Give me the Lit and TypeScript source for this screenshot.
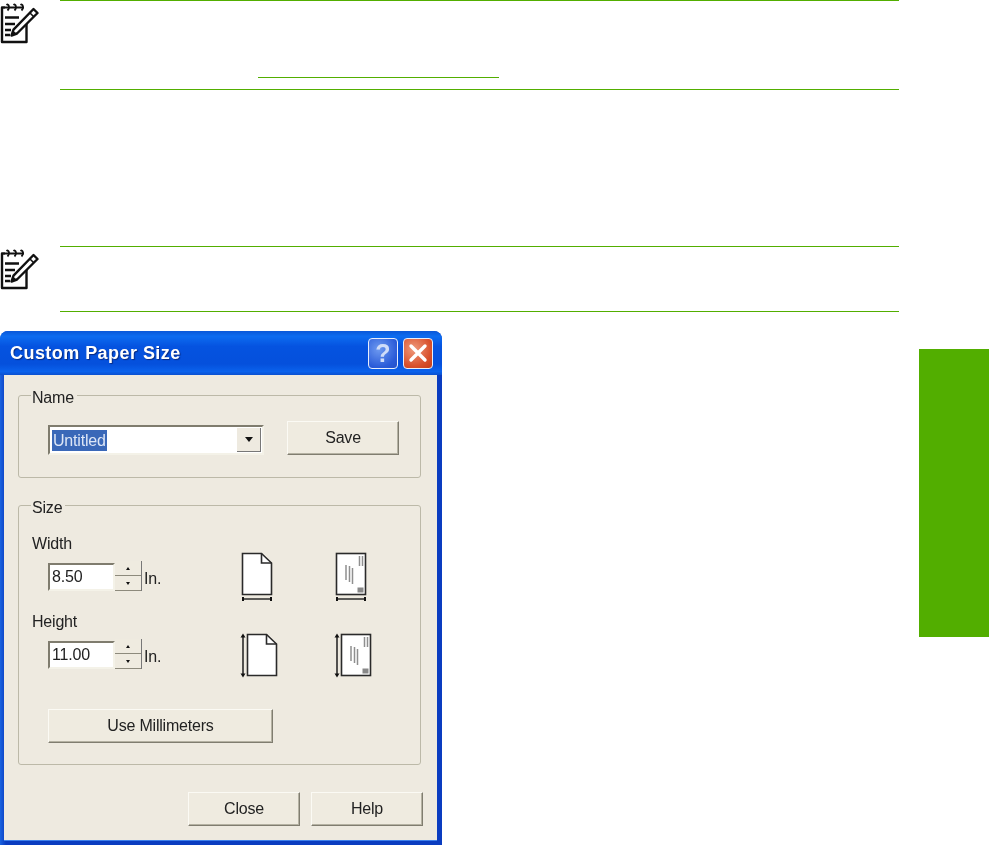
import { LitElement, html, css, svg } from "lit";
import { customElement } from "lit/decorators.js";

const noteIcon = html`<svg class="note-icon" viewBox="0 0 40 44" aria-hidden="true">
  <path d="M5 7.500H2V42H26.500V22" fill="none" stroke="#111" stroke-width="2.400" stroke-linejoin="round"/>
  <path d="M5 7.500h19" fill="none" stroke="#111" stroke-width="2"/>
  <path d="M6.500 5c2.500-2 3.500 3 1 5.500M13.500 5c2.500-2 3.500 3 1 5.500M20.500 5c2.500-2 3.500 3 1 5.500" fill="none" stroke="#111" stroke-width="1.800"/>
  <path d="M5 17.500h14M5 24h10M5 30h6M5 35h5" stroke="#111" stroke-width="2.400" fill="none"/>
  <path d="M33.500 9l4 4-20.500 20.500-5.500 2 2-5.800z" fill="#fff" stroke="#111" stroke-width="2.400" stroke-linejoin="round"/>
  <path d="M30 13l4 4" stroke="#111" stroke-width="1.600"/>
  <path d="M11.500 35.500l1.700-5 3.300 3.300z" fill="#111"/>
</svg>`;

const page = (arrow: "h" | "v") => {
  const ox = arrow === "v" ? 5 : 0;
  return svg`<path d="M${2.500 + ox} 4.500H${21.500 + ox}L${31.500 + ox} 14V45.500H${2.500 + ox}Z" fill="#fff" stroke="#2a2a2a" stroke-width="1.600"/>
    <path d="M${21.500 + ox} 4.500V14H${31.500 + ox}" fill="none" stroke="#2a2a2a" stroke-width="1.600"/>`;
};

const env = (arrow: "h" | "v") => {
  const ox = arrow === "v" ? 5 : 0;
  return svg`<rect x="${2.500 + ox}" y="4.500" width="29" height="41" fill="#fff" stroke="#2a2a2a" stroke-width="1.600"/>
    <path d="M${12 + ox} 16v15M${15.500 + ox} 17v16M${18.500 + ox} 19v16M${25.500 + ox} 7v10M${28.500 + ox} 7v10" stroke="#8f8f8f" stroke-width="1.500" fill="none"/>
    <rect x="${23.500 + ox}" y="38.500" width="6" height="5" fill="#888"/>`;
};

const arrow = (a: "h" | "v") =>
  a === "h"
    ? svg`<path d="M3 50H31" stroke="#2a2a2a" stroke-width="1.600"/><path d="M3 48v4M31 48v4" stroke="#111" stroke-width="2"/>`
    : svg`<path d="M3 5V46" stroke="#2a2a2a" stroke-width="1.600"/><path d="M.5 7.500L3 3.500l2.500 4zM.5 43.500L3 47.500l2.500-4z" fill="#111"/>`;

const paperIcon = (kind: "page" | "env", a: "h" | "v") => html`<svg class="paper" viewBox="0 0 40 54" aria-hidden="true">
  ${kind === "page" ? page(a) : env(a)}${arrow(a)}
</svg>`;

@customElement("app-root")
export class AppRoot extends LitElement {
  static styles = css`
    :host { display: block; width: 989px; height: 845px; overflow: hidden; background: #fff; font-family: "Liberation Sans", Arial, sans-serif; }
    .layout { display: grid; grid-template-columns: 919px 70px; height: 845px; }
    .main { min-width: 0; }
    .note { display: flex; }
    .note-icon { width: 40px; height: 44px; flex: none; margin-right: 20px; filter: blur(0.3px); }
    .note-body { width: 839px; border-top: 1px solid #52ae00; border-bottom: 1px solid #52ae00; box-sizing: border-box; }
    .note-one .note-body { height: 90px; }
    .note-two { margin-top: 156px; }
    .note-two .note-body { height: 66px; }
    .link-line { width: 241px; height: 1px; background: #52ae00; margin: 76px 0 0 198px; }
    .tab { background: #52ae00; margin-top: 349px; height: 288px; }

    .dialog { width: 442px; margin-top: 19px; height: 514px; box-sizing: border-box; display: flex; flex-direction: column; border-radius: 8px 8px 0 0; overflow: hidden; background: linear-gradient(90deg, #1a63e0 0, #0a3cc0 6px, #0a3cc0 100%); filter: blur(0.45px); }
    .titlebar { height: 44px; flex: none; display: flex; align-items: center; padding: 0 9px 0 10px; background: linear-gradient(180deg, #0a57d8 0%, #0d6cf0 12%, #0553e0 35%, #0550dc 75%, #0a62ec 92%, #0a50d0 100%); }
    .title { flex: 1; color: #fff; font-size: 18px; font-weight: 700; letter-spacing: 0.45px; text-shadow: 1px 1px 1px #0a2a80; }
    .cap { width: 30px; height: 31px; box-sizing: border-box; border: 1px solid #e8eefc; border-radius: 4px; color: #cfdcf8; display: flex; align-items: center; justify-content: center; margin-left: 5px; font-size: 25px; font-weight: 700; }
    .cap.help { background: radial-gradient(circle at 35% 35%, #6e9af0, #2a5bd8 70%, #2450c8); }
    .cap.close { background: radial-gradient(circle at 35% 35%, #ef9a7c, #d8502c 65%, #c43c18); }
    .cap svg { width: 20px; height: 20px; }

    .body { flex: 1; margin: 0 5px 5px 4px; background: #eeeae0; padding: 11px 14px 14px 14px; border-bottom: 1px solid #3f80ea; display: flex; flex-direction: column; font-size: 16px; letter-spacing: -0.2px; color: #222; }
    fieldset { margin: 0 2px 0 0; border: 1px solid #bcb9a8; border-radius: 3px; padding: 0 0 0 13px; min-width: 0; }
    legend { padding: 0 3px 0 1px; height: 18px; line-height: 24px; font-size: 16px; margin-left: -1px; }
    .group-name { padding-top: 17px; padding-bottom: 22px; }
    .name-row { display: flex; align-items: flex-end; gap: 23px; margin-left: 16px; }
    .combo { width: 216px; height: 30px; box-sizing: border-box; display: flex; align-items: center; background: #fff; border: 2px solid; border-color: #7f7c6e #f4f2e8 #f4f2e8 #7f7c6e; padding: 0 1px 0 2px; }
    .selected { background: #3a68b8; color: #dde6f6; height: 21px; line-height: 21px; padding: 0 1px; }
    .combo-spacer { flex: 1; }
    .combo-btn { width: 24px; height: 24px; background: #eeeae0; border-right: 1px solid #777; border-bottom: 1px solid #777; display: flex; align-items: center; justify-content: center; box-sizing: border-box; }
    .combo-btn i { width: 0; height: 0; border-left: 4px solid transparent; border-right: 4px solid transparent; border-top: 5px solid #111; }

    .btn { font: inherit; letter-spacing: inherit; color: #222; height: 34px; box-sizing: border-box; padding: 0; background: #efebe0; border: 1px solid; border-color: #fbfaf4 #807d70 #807d70 #fbfaf4; box-shadow: inset -1px -1px 0 #b5b2a3; text-align: center; line-height: 30px; }
    .btn-save { width: 112px; }
    .btn-mm { width: 225px; margin: 42px 0 0 16px; display: block; }
    .btn-foot { width: 112px; }

    .group-size { margin-top: 18px; padding-top: 19px; padding-bottom: 21px; }
    .size-row { display: grid; grid-template-columns: 208px 94px 40px; height: 56px; }
    .size-row + .size-row { margin-top: 22px; }
    .field-label { height: 18px; line-height: 22px; }
    .spin-line { display: flex; align-items: flex-end; margin: 10px 0 0 16px; }
    .spin-input { width: 67px; height: 28px; box-sizing: border-box; background: #fff; border: 2px solid; border-color: #7f7c6e #f4f2e8 #f4f2e8 #7f7c6e; line-height: 24px; padding-left: 2px; }
    .spin { width: 27px; height: 30px; display: flex; flex-direction: column; box-sizing: border-box; border-right: 1px solid #777; }
    .spin b { flex: 1; display: flex; align-items: center; justify-content: center; border-bottom: 1px solid #8d8a7c; background: #efebe0; }
    .spin b i { width: 0; height: 0; border-left: 2.500px solid transparent; border-right: 2.500px solid transparent; }
    .spin b.up i { border-bottom: 3px solid #111; }
    .spin b.down i { border-top: 3px solid #111; }
    .unit { margin-left: 2px; line-height: 24px; }
    .paper { width: 40px; height: 54px; display: block; margin-top: 16px; }
    .size-row + .size-row .paper { margin-top: 19px; }

    .footer { display: flex; justify-content: flex-end; gap: 11px; margin-top: 27px; }
  `;

  private sizeRow(label: string, value: string, a: "h" | "v") {
    return html`<div class="size-row">
      <div>
        <div class="field-label">${label}</div>
        <div class="spin-line">
          <div class="spin-input">${value}</div>
          <div class="spin"><b class="up"><i></i></b><b class="down"><i></i></b></div>
          <span class="unit">In.</span>
        </div>
      </div>
      ${paperIcon("page", a)}
      ${paperIcon("env", a)}
    </div>`;
  }

  render() {
    return html`<div class="layout">
      <div class="main">
        <div class="note note-one">
          ${noteIcon}
          <div class="note-body"><div class="link-line"></div></div>
        </div>
        <div class="note note-two">
          ${noteIcon}
          <div class="note-body"></div>
        </div>
        <div class="dialog">
          <div class="titlebar">
            <div class="title">Custom Paper Size</div>
            <div class="cap help">?</div>
            <div class="cap close"><svg viewBox="0 0 20 20"><path d="M3 3l14 14M17 3L3 17" stroke="#fff" stroke-width="3.400" stroke-linecap="round"/></svg></div>
          </div>
          <div class="body">
            <fieldset class="group-name">
              <legend>Name</legend>
              <div class="name-row">
                <div class="combo">
                  <span class="selected">Untitled</span>
                  <span class="combo-spacer"></span>
                  <span class="combo-btn"><i></i></span>
                </div>
                <button class="btn btn-save">Save</button>
              </div>
            </fieldset>
            <fieldset class="group-size">
              <legend>Size</legend>
              ${this.sizeRow("Width", "8.50", "h")}
              ${this.sizeRow("Height", "11.00", "v")}
              <button class="btn btn-mm">Use Millimeters</button>
            </fieldset>
            <div class="footer">
              <button class="btn btn-foot">Close</button>
              <button class="btn btn-foot">Help</button>
            </div>
          </div>
        </div>
      </div>
      <div class="tab"></div>
    </div>`;
  }
}
